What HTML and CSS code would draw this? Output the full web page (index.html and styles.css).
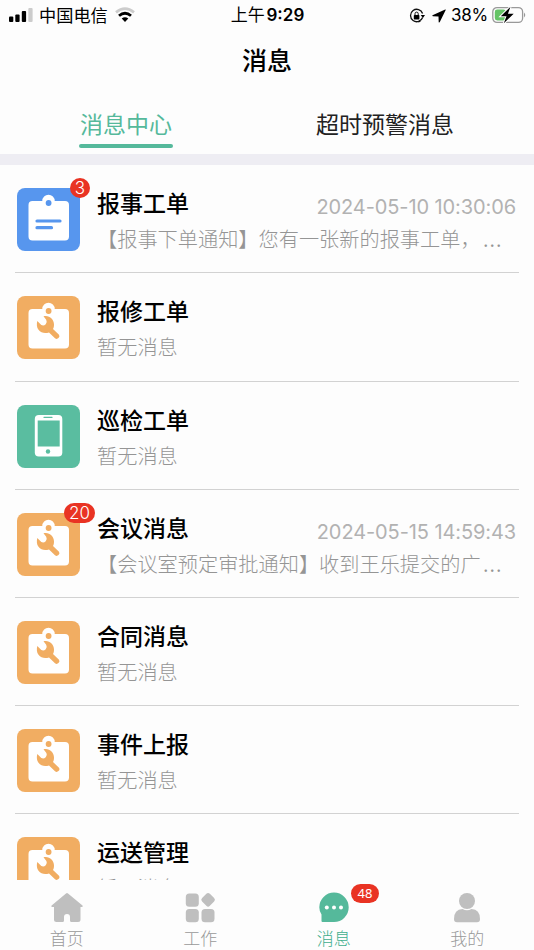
FILE: index.html
```html
<!DOCTYPE html>
<html lang="zh-CN">
<head>
<meta charset="utf-8">
<title>消息</title>
<link rel="stylesheet" href="styles.css">
</head>
<body>
<svg class="defs" aria-hidden="true">
  <symbol id="clip" viewBox="0 0 63 63">
    <path fill="#fff" d="M15.500 13H25.300A6.200 6.200 0 0 1 37.700 13H48Q52 13 52 17V48.500Q52 52.500 48 52.500H15.500Q11.500 52.500 11.500 48.500V17Q11.500 13 15.500 13Z"/>
    <circle cx="31.600" cy="15" r="2.900" fill="currentColor"/>
  </symbol>
  <symbol id="repair" viewBox="0 0 63 63">
    <use href="#clip"/>
    <path fill="currentColor" d="M26.500 20.300C32 18.800 37 23 37 28.500C37 30.500 36.600 32 36 33L42 38.700A2.700 2.700 0 0 1 38 42.200L32 36.400C28 37.800 24 37 21.500 33.800C19.700 31.500 19.500 28 20.300 25L24.300 29Q26.700 30.300 28.700 28.200Q30.500 26 29.200 23.700Z"/>
  </symbol>
  <symbol id="order" viewBox="0 0 63 63">
    <use href="#clip"/>
    <path d="M20 33H43M20 39.700H34.500" stroke="currentColor" stroke-width="3.200" stroke-linecap="round"/>
  </symbol>
  <symbol id="phone" viewBox="0 0 63 63">
    <rect x="17.800" y="10" width="27.500" height="41.500" rx="4" fill="#fff"/>
    <rect x="20.700" y="15.500" width="22" height="26" fill="currentColor"/>
    <path d="M27 12.300H35" stroke="currentColor" stroke-width="1.300" stroke-linecap="round"/>
    <circle cx="31" cy="46.500" r="2.200" fill="currentColor"/>
  </symbol>
</svg>
<div class="app">
  <div class="status">
    <div class="status-left">
      <svg class="signal" viewBox="0 0 24 16"><rect y="9.500" width="4.300" height="5.500" rx="1"/><rect x="6.300" y="7.500" width="4.300" height="7.500" rx="1"/><rect x="12.800" y="4" width="4.300" height="11" rx="1"/><rect x="19.300" y="1" width="4.300" height="14" rx="1" fill="#ccc"/></svg>
      <span class="carrier">中国电信</span>
      <svg class="wifi" viewBox="0 0 20 16"><path d="M1 5.400Q10-2.200 19 5.400" fill="none" stroke="#ccc" stroke-width="2.700"/><path d="M4 8.800Q10 3.700 16 8.800" fill="none" stroke="#000" stroke-width="2.800"/><path d="M6.700 11.500Q10 9.200 13.300 11.500L10 15Z"/></svg>
    </div>
    <div class="clock">上午 <b>9:29</b></div>
    <div class="status-right">
      <svg class="lock" viewBox="0 0 16 16"><path d="M13.600 9.500A6.200 6.200 0 1 1 13.600 5.500M11.500 12.800A6.200 6.200 0 0 1 9.500 13.800" fill="none" stroke="#111" stroke-width="1.300"/><path d="M11.700 7H16L13.900 10Z"/><rect x="4.800" y="7" width="5.600" height="4.400" rx=".7"/><path d="M6 7V5.700A1.600 1.600 0 0 1 9.200 5.700V7" fill="none" stroke="#111" stroke-width="1"/></svg>
      <svg class="nav-arrow" viewBox="0 0 14 14"><path d="M13.200.5L.5 6.300Q0 7 .8 7.200L6.500 7.400L6.700 13.200Q7.200 14 7.800 13.100L13.700 1Q13.900.3 13.200.5Z"/></svg>
      <span class="percent">38%</span>
      <svg class="battery" viewBox="0 0 34 18"><rect x=".8" y="1.600" width="29.800" height="14.800" rx="4.200" fill="none" stroke="#999" stroke-width="1.300"/><path d="M32 6.500Q34.500 9 32 11.500Z" fill="#999"/><rect x="2.800" y="3.600" width="11" height="10.800" rx="2.400" fill="#65c466"/><path d="M18.500.8L8.800 10.300H14.500L11.800 17.300L21.700 7.800H15.900Z" fill="#000" stroke="#fff" stroke-width="2" paint-order="stroke"/></svg>
    </div>
  </div>
  <h1 class="title">消息</h1>
  <div class="tabs">
    <div class="tab active"><span>消息中心</span></div>
    <div class="tab"><span>超时预警消息</span></div>
  </div>
  <div class="list">
    <div class="row"><div class="icon blue"><svg><use href="#order"/></svg><i class="badge">3</i></div><div class="body"><div class="head"><h2>报事工单</h2><time>2024-05-10 10:30:06</time></div><p>【报事下单通知】您有一张新的报事工单，<span class="dots">…</span></p></div></div>
    <div class="row"><div class="icon orange"><svg><use href="#repair"/></svg></div><div class="body"><div class="head"><h2>报修工单</h2></div><p>暂无消息</p></div></div>
    <div class="row"><div class="icon green"><svg><use href="#phone"/></svg></div><div class="body"><div class="head"><h2>巡检工单</h2></div><p>暂无消息</p></div></div>
    <div class="row"><div class="icon orange"><svg><use href="#repair"/></svg><i class="badge wide">20</i></div><div class="body"><div class="head"><h2>会议消息</h2><time>2024-05-15 14:59:43</time></div><p>【会议室预定审批通知】收到王乐提交的广<span class="dots">…</span></p></div></div>
    <div class="row"><div class="icon orange"><svg><use href="#repair"/></svg></div><div class="body"><div class="head"><h2>合同消息</h2></div><p>暂无消息</p></div></div>
    <div class="row"><div class="icon orange"><svg><use href="#repair"/></svg></div><div class="body"><div class="head"><h2>事件上报</h2></div><p>暂无消息</p></div></div>
    <div class="row"><div class="icon orange"><svg><use href="#repair"/></svg></div><div class="body"><div class="head"><h2>运送管理</h2></div><p>暂无消息</p></div></div>
  </div>
  <nav class="tabbar">
    <div class="item"><svg viewBox="0 0 32 32"><path d="M15 1.500Q16 .7 17 1.500L31.500 13.500Q32.300 14.800 30.800 15H29.500V27.500Q29.500 30 27 30H20.500Q19 30 19 28.500V25Q19 22 16 22T13 25V28.500Q13 30 11.500 30H5.500Q3 30 3 27.500V15H1.300Q-.3 14.800.6 13.500Z"/></svg><span>首页</span></div>
    <div class="item"><svg viewBox="0 0 32 32"><rect x="1.800" y="1.500" width="13" height="13.200" rx="3.500"/><rect x="1.800" y="17" width="13" height="13.200" rx="3.500"/><rect x="17.500" y="17" width="13" height="13.200" rx="3.500"/><rect x="18.600" y="2.300" width="11" height="11" rx="2.500" transform="rotate(45 24.100 7.800)"/></svg><span>工作</span></div>
    <div class="item on"><svg viewBox="0 0 32 32"><path d="M3.500 29Q3.500 30 4.500 30H16A14.700 14.700 0 1 0 1.300 15.300Q1.300 19.500 3.500 22.500Z"/><g fill="#fff"><circle cx="8.800" cy="15.500" r="2"/><circle cx="16" cy="15.500" r="2"/><circle cx="23" cy="15.500" r="2"/></g></svg><i class="count">48</i><span>消息</span></div>
    <div class="item"><svg viewBox="0 0 32 32"><circle cx="16" cy="9" r="8"/><path d="M3 27Q3 17.500 11.500 17Q16 19.500 20.500 17Q29 17.500 29 27Q29 30.300 26 30.300H6Q3 30.300 3 27Z"/></svg><span>我的</span></div>
  </nav>
</div>
</body>
</html>
```
FILE: styles.css
```css
* { box-sizing: border-box; }
body {
  margin: 0;
  background: #fdfdfd;
  font-family: Inter, "Noto Sans CJK SC", sans-serif;
}
h1, h2, p { margin: 0; }
i { font-style: normal; }
svg { display: block; flex: none; }
.defs { display: none; }
.app {
  width: 534px;
  height: 950px;
  display: flex;
  flex-direction: column;
  overflow: hidden;
}
.status {
  height: 31px;
  flex: none;
  display: grid;
  grid-template-columns: 1fr auto 1fr;
  align-items: center;
  padding: 0 8px 0 9px;
  line-height: 31px;
}
.status-left, .status-right { display: flex; align-items: center; }
.status-right { justify-content: flex-end; }
.signal { width: 24px; height: 16px; margin-top: -2px; }
.carrier { font-size: 17.200px; margin-left: 6px; }
.wifi { width: 20px; height: 16px; margin-left: 7px; margin-top: -1px; }
.clock { font-size: 17px; white-space: nowrap; }
.clock b { font-weight: 600; margin-left: -3px; }
.lock { width: 16px; height: 16px; }
.nav-arrow { width: 14px; height: 14px; margin-left: 7px; }
.percent { font-size: 17px; margin: 0 4px 0 5px; letter-spacing: -.2px; }
.battery { width: 34px; height: 18px; margin-top: -2px; }
.title {
  flex: none;
  height: 59px;
  font-size: 25px;
  font-weight: 500;
  line-height: 61px;
  text-align: center;
}
.tabs {
  flex: none;
  height: 75px;
  display: flex;
  padding-right: 16px;
  border-bottom: 11px solid #eeedf3;
}
.tab {
  flex: 1;
  display: flex;
  justify-content: center;
  font-size: 23px;
  line-height: 71px;
  color: #222;
}
.tab:first-child { flex: 0 0 252px; }
.active { color: #55b99b; }
.active span {
  position: relative;
  padding: 0 1px;
}
.active span::after {
  content: "";
  position: absolute;
  left: 0;
  right: 0;
  top: 54px;
  height: 4px;
  border-radius: 2px;
  background: #55b99b;
}
.tab span { white-space: nowrap; }
.list { height: 715px; flex: none; overflow: hidden; }
.row {
  height: 108.200px;
  display: flex;
  margin: 0 15px;
  padding: 23px 3px 0 2px;
  border-bottom: 1px solid #d2d2d2;
}
.row:first-child { height: 108.400px; }
.icon {
  position: relative;
  width: 63px;
  height: 63px;
  flex: none;
  border-radius: 8px;
}
.icon svg { width: 100%; height: 100%; }
.blue { background: #5796ee; color: #5796ee; }
.orange { background: #f1ad62; color: #f1ad62; }
.green { background: #5abda0; color: #5abda0; }
.badge {
  position: absolute;
  top: -10px;
  right: -10px;
  width: 20px;
  height: 20px;
  border-radius: 10px;
  background: #e93323;
  color: #fff;
  font-size: 17px;
  font-weight: 300;
  line-height: 20px;
  text-align: center;
}
.wide { width: 31px; right: -15px; }
.body { flex: 1; min-width: 0; padding-left: 17px; }
.head {
  display: flex;
  justify-content: space-between;
  height: 32px;
  line-height: 32px;
}
h2 { font-size: 23px; font-weight: 500; }
time {
  font-size: 20px;
  letter-spacing: -.1px;
  line-height: 38px;
  color: #b2b2b2;
}
p {
  font-size: 20.200px;
  font-weight: 300;
  line-height: 40px;
  white-space: nowrap;
  color: #959595;
}
.dots { font-size: 23px; line-height: 0; margin-left: 2px; }
.tabbar {
  flex: none;
  height: 70px;
  display: grid;
  grid-template-columns: repeat(4, 1fr);
  fill: #bfbfbf;
  color: #999;
}
.item {
  position: relative;
  display: flex;
  flex-direction: column;
  align-items: center;
  padding-top: 12px;
  font-size: 17px;
  font-weight: 300;
  line-height: 30px;
}
.item svg { width: 32px; height: 32px; }
.on { color: #3fae8d; fill: #55b99b; }
.count {
  position: absolute;
  left: 84px;
  top: 4px;
  width: 28px;
  height: 19px;
  border-radius: 10px;
  background: #e93323;
  color: #fff;
  font: 13px/19px "Noto Sans", sans-serif;
  text-align: center;
}
```
